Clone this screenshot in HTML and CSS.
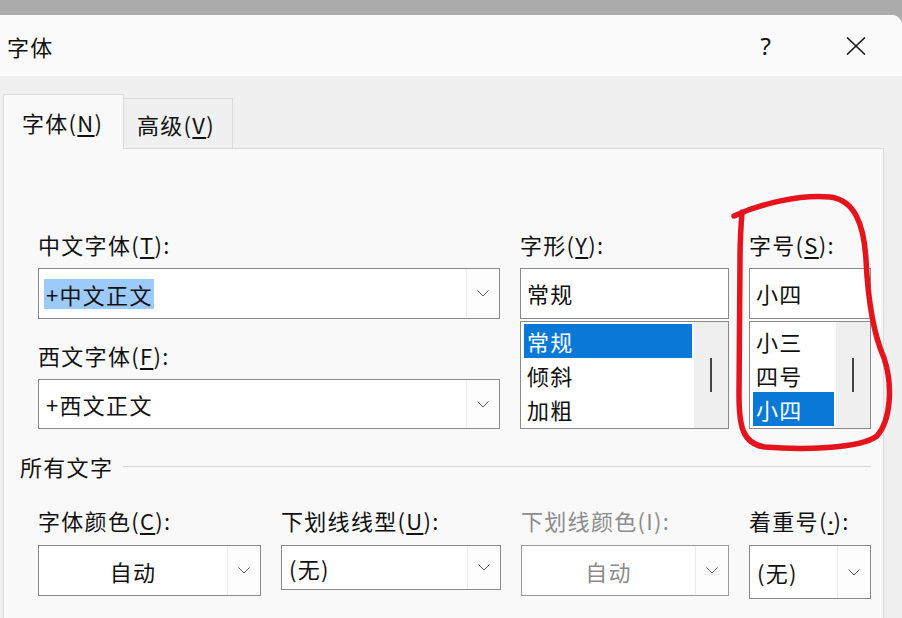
FILE: index.html
```html
<!DOCTYPE html>
<html lang="zh-CN">
<head>
    <meta charset="UTF-8">
    <meta name="viewport" content="width=device-width, initial-scale=1.0">
    <title>字体</title>
    <link rel="stylesheet" href="styles.css">
</head>
<body>
    <div class="backdrop"></div>

    <div class="dialog">
        <div class="titlebar">
            <span class="title">字体</span>
            <span class="help">?</span>
            <span class="close">
                <svg width="20" height="18" viewBox="0 0 20 18"><path d="M1 0.5 L19 17.5 M19 0.5 L1 17.5" stroke="#1a1a1a" stroke-width="1.6" fill="none"/></svg>
            </span>
        </div>

        <div class="body">
            <div class="tabs">
                <div class="tab active">字体(<u>N</u>)</div>
                <div class="tab">高级(<u>V</u>)</div>
            </div>

            <div class="panel">
                <div class="font-row">
                    <div class="col">
                        <div class="label">中文字体(<u>T</u>):</div>
                        <div class="combo">
                            <span class="value"><span class="picked">+中文正文</span></span>
                            <span class="drop"><svg width="12" height="7" viewBox="0 0 12 7"><path d="M0.5 0.5 L6 6 L11.5 0.5" stroke="#555" fill="none"/></svg></span>
                        </div>
                        <div class="label second">西文字体(<u>F</u>):</div>
                        <div class="combo short">
                            <span class="value">+西文正文</span>
                            <span class="drop"><svg width="12" height="7" viewBox="0 0 12 7"><path d="M0.5 0.5 L6 6 L11.5 0.5" stroke="#555" fill="none"/></svg></span>
                        </div>
                    </div>

                    <div class="col">
                        <div class="label">字形(<u>Y</u>):</div>
                        <div class="entry">常规</div>
                        <div class="listbox">
                            <ul>
                                <li class="sel">常规</li>
                                <li>倾斜</li>
                                <li>加粗</li>
                            </ul>
                            <div class="scroll"><span class="thumb"></span></div>
                        </div>
                    </div>

                    <div class="col">
                        <div class="label">字号(<u>S</u>):</div>
                        <div class="entry">小四</div>
                        <div class="listbox">
                            <ul>
                                <li>小三</li>
                                <li>四号</li>
                                <li class="sel">小四</li>
                            </ul>
                            <div class="scroll"><span class="thumb"></span></div>
                        </div>
                    </div>
                </div>

                <div class="group-title"><span>所有文字</span></div>

                <div class="effects-row">
                    <div class="col">
                        <div class="label">字体颜色(<u>C</u>):</div>
                        <div class="combo">
                            <span class="value center">自动</span>
                            <span class="drop"><svg width="12" height="7" viewBox="0 0 12 7"><path d="M0.5 0.5 L6 6 L11.5 0.5" stroke="#555" fill="none"/></svg></span>
                        </div>
                    </div>
                    <div class="col">
                        <div class="label">下划线线型(<u>U</u>):</div>
                        <div class="combo low">
                            <span class="value">(无)</span>
                            <span class="drop"><svg width="12" height="7" viewBox="0 0 12 7"><path d="M0.5 0.5 L6 6 L11.5 0.5" stroke="#555" fill="none"/></svg></span>
                        </div>
                    </div>
                    <div class="col disabled">
                        <div class="label">下划线颜色(I):</div>
                        <div class="combo">
                            <span class="value center">自动</span>
                            <span class="drop"><svg width="12" height="7" viewBox="0 0 12 7"><path d="M0.5 0.5 L6 6 L11.5 0.5" stroke="#666" fill="none"/></svg></span>
                        </div>
                    </div>
                    <div class="col">
                        <div class="label">着重号(<u class="dot">·</u>):</div>
                        <div class="combo tall">
                            <span class="value">(无)</span>
                            <span class="drop"><svg width="12" height="7" viewBox="0 0 12 7"><path d="M0.5 0.5 L6 6 L11.5 0.5" stroke="#555" fill="none"/></svg></span>
                        </div>
                    </div>
                </div>
            </div>
        </div>
    </div>

    <!-- hand-drawn red ring around the size picker -->
    <svg class="ring" width="902" height="618" viewBox="0 0 902 618">
        <path d="M734 216 C760 204, 800 194, 830 197 C855 200, 864 225, 866 260 C868 300, 873 333, 884 358 C893 385, 891 420, 877 436 C860 449, 800 450, 765 447 C742 444, 739 425, 739 395 L740 260 C740 240, 741 225, 742 212" stroke="#e5131b" stroke-width="5.5" fill="none" stroke-linecap="round" stroke-linejoin="round"/>
    </svg>
</body>
</html>
```

FILE: styles.css
```css
body {
    margin: 0;
    padding: 0;
    background: #ababab;
    font-family: "Noto Sans CJK SC", "Noto Sans", sans-serif;
    font-size: 22px;
    letter-spacing: 1.3px;
    color: #111;
    overflow: hidden;
}

.backdrop { height: 15px; }

.dialog {
    background: #f0f0f0;
    border-top-right-radius: 10px;
    overflow: hidden;
    height: 603px;
}

.titlebar {
    display: flex;
    align-items: center;
    height: 61px;
    background: #fbfbfb;
}
.title { padding-left: 7px; line-height: 30px; }
.help { margin-left: auto; font-family: "Noto Sans", sans-serif; font-size: 24px; line-height: 30px; letter-spacing: 0; }
.close { display: flex; margin-left: 75px; margin-right: 36px; }

.body { padding: 18px 18px 0 3px; }

.tabs { display: flex; align-items: flex-end; height: 54px; }
.tab {
    display: flex;
    align-items: center;
    box-sizing: border-box;
    height: 50px;
    width: 109px;
    padding-left: 13px;
    border: 1px solid #dadada;
    border-left: none;
    border-bottom: none;
    background: #f0f0f0;
    white-space: nowrap;
}
.tab.active {
    height: 55px;
    width: 121px;
    padding-left: 18px;
    margin-bottom: -1px;
    border-left: 1px solid #dadada;
    background: #f9f9f9;
    position: relative;
}
.tab u, .label u { text-underline-offset: 3px; }
.dot { font-family: "Noto Sans", sans-serif; letter-spacing: 0; }

.panel {
    border: 1px solid #dadada;
    background: #f9f9f9;
    padding: 80px 12px 0 16px;
    height: 500px;
}

.label { height: 30px; line-height: 30px; margin-bottom: 9px; white-space: nowrap; }
.label.second { margin-top: 21px; }

.font-row {
    display: grid;
    grid-template-columns: 462px 209px 122px;
    column-gap: 20px;
    margin-left: 18px;
}

.combo {
    display: flex;
    box-sizing: border-box;
    height: 51px;
    border: 1px solid #8a8a8a;
    background: #fff;
}
.combo.short { height: 50px; }
.combo.low { height: 45px; }
.combo.tall { height: 54px; }
.value {
    flex: 1;
    display: flex;
    align-items: center;
    padding-left: 7px;
    white-space: nowrap;
}
.value.center { justify-content: center; padding-left: 0; }
.picked { background: #9ccbfb; line-height: 30px; padding: 0 1px 0 2px; margin-left: -2px; }
.drop {
    width: 32px;
    display: flex;
    align-items: center;
    justify-content: center;
    border-left: 1px solid #ececec;
    background: #fdfdfd;
}

.entry {
    box-sizing: border-box;
    height: 51px;
    line-height: 49px;
    padding-left: 6px;
    border: 1px solid #8a8a8a;
    background: #fff;
}

.listbox {
    display: flex;
    box-sizing: border-box;
    height: 108px;
    margin-top: 2px;
    border: 1px solid #8a8a8a;
    background: #fff;
}
.listbox ul {
    flex: 1;
    list-style: none;
    margin: 0;
    padding: 2px 2px 0 3px;
}
.listbox li { height: 34px; line-height: 34px; padding-left: 3px; }
.listbox li.sel { background: #0a78d7; color: #fff; }
.scroll {
    width: 34px;
    display: flex;
    align-items: center;
    justify-content: center;
    background: #efefef;
}
.thumb { width: 2px; height: 34px; background: #444; }

.group-title {
    display: flex;
    align-items: center;
    height: 30px;
    margin-top: 22px;
}
.group-title::after {
    content: "";
    flex: 1;
    height: 1px;
    margin-left: 10px;
    background: #d4d4d4;
}

.effects-row {
    display: grid;
    grid-template-columns: 223px 220px 208px 122px;
    column-gap: 20px;
    align-items: start;
    margin-top: 24px;
    margin-left: 18px;
}
.effects-row .label { margin-bottom: 10px; }
.disabled { color: #8c8c8c; }
.disabled .combo { border-color: #9a9a9a; }

.ring { position: absolute; left: 0; top: 0; pointer-events: none; }
```
